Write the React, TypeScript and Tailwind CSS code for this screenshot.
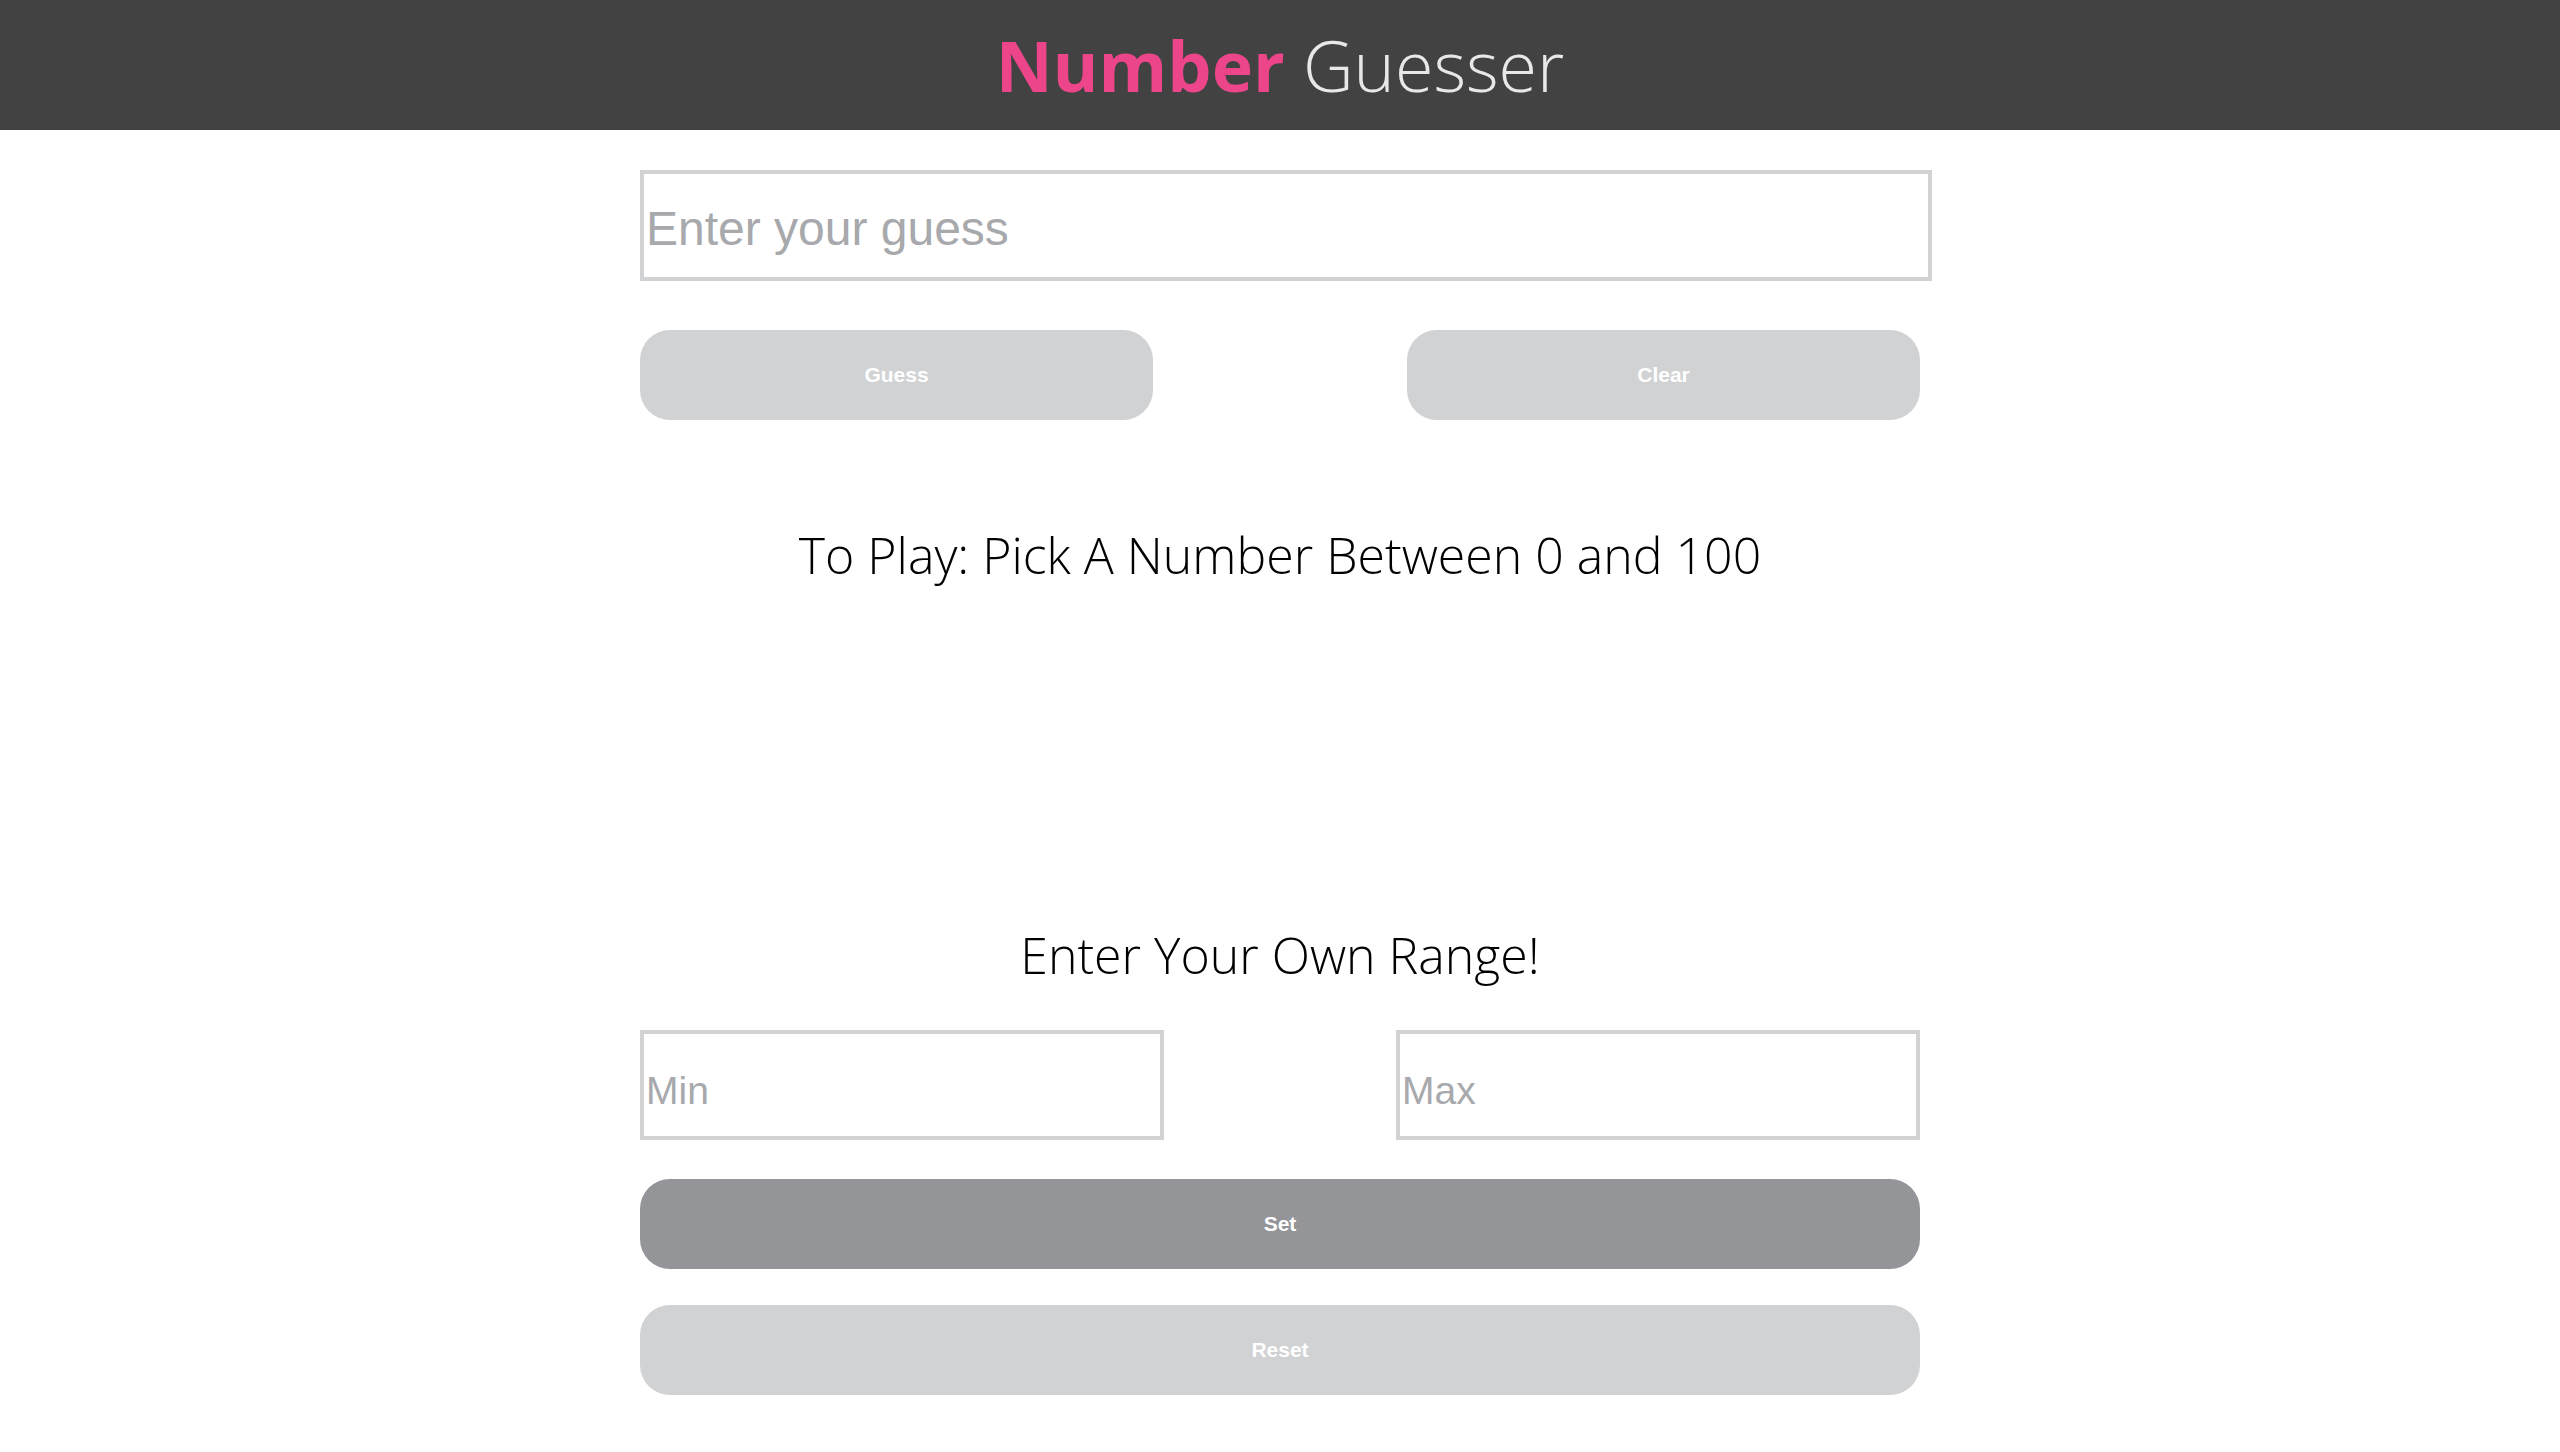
import React from "react";

const btnText = "text-white text-[21px] font-bold font-['Liberation_Sans',Arial,sans-serif]";

export default function App() {
  return (
    <div className="min-h-screen bg-white font-['Open_Sans',sans-serif]">
      {/* Header */}
      <header className="h-[130px] bg-[#424242] flex items-center justify-center">
        <h1 className="text-[70px] leading-none">
          <span className="font-bold text-[#ed458a]">Number</span>{" "}
          <span className="font-light text-[#e8e8e8]">Guesser</span>
        </h1>
      </header>

      <main className="w-[1280px] mx-auto pt-[40px] pb-10">
        <input
          type="text"
          placeholder="Enter your guess"
          className="block w-[1292px] max-w-none h-[111px] border-4 border-[#d1d2d4] px-[2px] pt-[6px] text-[48px] font-['Liberation_Sans',Arial,sans-serif] text-[#333] placeholder:text-[#a7a9ac] outline-none"
        />

        <div className="flex justify-between mt-[49px]">
          <button className={`w-[513px] h-[90px] rounded-[30px] bg-[#d1d2d4] ${btnText}`}>
            Guess
          </button>
          <button className={`w-[513px] h-[90px] rounded-[30px] bg-[#d1d2d4] ${btnText}`}>
            Clear
          </button>
        </div>

        <p className="mt-[101px] text-center text-[50px] leading-[68px] font-light text-black">
          To Play: Pick A Number Between 0 and 100
        </p>

        <h2 className="mt-[332px] text-center text-[50px] leading-[68px] font-light text-black">
          Enter Your Own Range!
        </h2>

        <div className="flex justify-between mt-[41px]">
          <input
            type="text"
            placeholder="Min"
            className="block w-[524px] h-[110px] border-4 border-[#d1d2d4] px-[2px] pt-[12px] text-[39px] font-['Liberation_Sans',Arial,sans-serif] text-[#333] placeholder:text-[#a7a9ac] outline-none"
          />
          <input
            type="text"
            placeholder="Max"
            className="block w-[524px] h-[110px] border-4 border-[#d1d2d4] px-[2px] pt-[12px] text-[39px] font-['Liberation_Sans',Arial,sans-serif] text-[#333] placeholder:text-[#a7a9ac] outline-none"
          />
        </div>

        <button className={`block w-full h-[90px] mt-[39px] rounded-[30px] bg-[#939598] ${btnText}`}>
          Set
        </button>
        <button className={`block w-full h-[90px] mt-[36px] rounded-[30px] bg-[#d1d2d4] ${btnText}`}>
          Reset
        </button>
      </main>
    </div>
  );
}
